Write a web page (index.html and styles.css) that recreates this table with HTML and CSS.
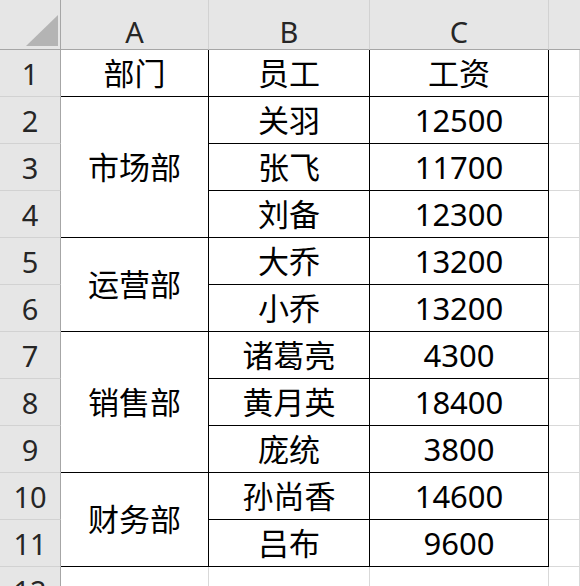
FILE: index.html
```html
<!DOCTYPE html>
<html lang="zh">
<head>
<meta charset="utf-8">
<link rel="stylesheet" href="styles.css">
</head>
<body>
<div class="sheet">
  <div class="corner"><svg class="tri" width="32" height="31" viewBox="0 0 32 31"><polygon points="0,31 32,31 32,0" fill="#b4b4b4"/></svg></div>
  <div class="colhead">A</div>
  <div class="colhead">B</div>
  <div class="colhead">C</div>
  <div class="colhead last"></div>

  <div class="rowhead">1</div>
  <div class="cell b">部门</div>
  <div class="cell b">员工</div>
  <div class="cell b">工资</div>
  <div class="cell g"></div>

  <div class="rowhead">2</div>
  <div class="cell b span3">市场部</div>
  <div class="cell b">关羽</div>
  <div class="cell b">12500</div>
  <div class="cell g"></div>

  <div class="rowhead">3</div>
  <div class="cell b">张飞</div>
  <div class="cell b">11700</div>
  <div class="cell g"></div>

  <div class="rowhead">4</div>
  <div class="cell b">刘备</div>
  <div class="cell b">12300</div>
  <div class="cell g"></div>

  <div class="rowhead">5</div>
  <div class="cell b span2">运营部</div>
  <div class="cell b">大乔</div>
  <div class="cell b">13200</div>
  <div class="cell g"></div>

  <div class="rowhead">6</div>
  <div class="cell b">小乔</div>
  <div class="cell b">13200</div>
  <div class="cell g"></div>

  <div class="rowhead">7</div>
  <div class="cell b span3">销售部</div>
  <div class="cell b">诸葛亮</div>
  <div class="cell b">4300</div>
  <div class="cell g"></div>

  <div class="rowhead">8</div>
  <div class="cell b">黄月英</div>
  <div class="cell b">18400</div>
  <div class="cell g"></div>

  <div class="rowhead">9</div>
  <div class="cell b">庞统</div>
  <div class="cell b">3800</div>
  <div class="cell g"></div>

  <div class="rowhead">10</div>
  <div class="cell b span2">财务部</div>
  <div class="cell b">孙尚香</div>
  <div class="cell b">14600</div>
  <div class="cell g"></div>

  <div class="rowhead">11</div>
  <div class="cell b">吕布</div>
  <div class="cell b">9600</div>
  <div class="cell g"></div>

  <div class="rowhead">12</div>
  <div class="cell g"></div>
  <div class="cell g"></div>
  <div class="cell g"></div>
  <div class="cell g"></div>
</div>
</body>
</html>
```
FILE: styles.css
```css
html, body {
  margin: 0;
  padding: 0;
  background: #ffffff;
  overflow: hidden;
}

.sheet {
  display: grid;
  grid-template-columns: 61px 148px 161px 179px 1fr;
  grid-template-rows: 50px repeat(12, 47px);
  width: 580px;
  height: 586px;
  overflow: hidden;
  font-family: "Noto Sans", "Noto Sans CJK SC", sans-serif;
}

.corner {
  background: #e6e6e6;
  border-right: 1px solid #a6a6a6;
  border-bottom: 1px solid #a6a6a6;
  display: flex;
  align-items: flex-end;
  justify-content: flex-end;
  padding: 0 2px 3px 0;
}

.tri {
  display: block;
}

.colhead {
  background: #e6e6e6;
  border-right: 1px solid #d2d2d2;
  border-bottom: 1px solid #a6a6a6;
  display: flex;
  align-items: flex-end;
  justify-content: center;
  padding-bottom: 3px;
  font-size: 29px;
  line-height: 1;
  color: #262626;
}

.colhead.last {
  border-right: none;
}

.rowhead {
  background: #e6e6e6;
  border-right: 1px solid #a6a6a6;
  border-bottom: 1px solid #d2d2d2;
  display: flex;
  align-items: center;
  justify-content: center;
  font-size: 29px;
  line-height: 1;
  color: #262626;
}

.cell {
  display: flex;
  align-items: center;
  justify-content: center;
  font-size: 31px;
  line-height: 1;
  color: #000000;
  white-space: nowrap;
}

.cell.b {
  border-right: 1px solid #000000;
  border-bottom: 1px solid #000000;
}

.cell.g {
  border-right: 1px solid #d9d9d9;
  border-bottom: 1px solid #d9d9d9;
}

.span3 {
  grid-row: span 3;
}

.span2 {
  grid-row: span 2;
}
```
